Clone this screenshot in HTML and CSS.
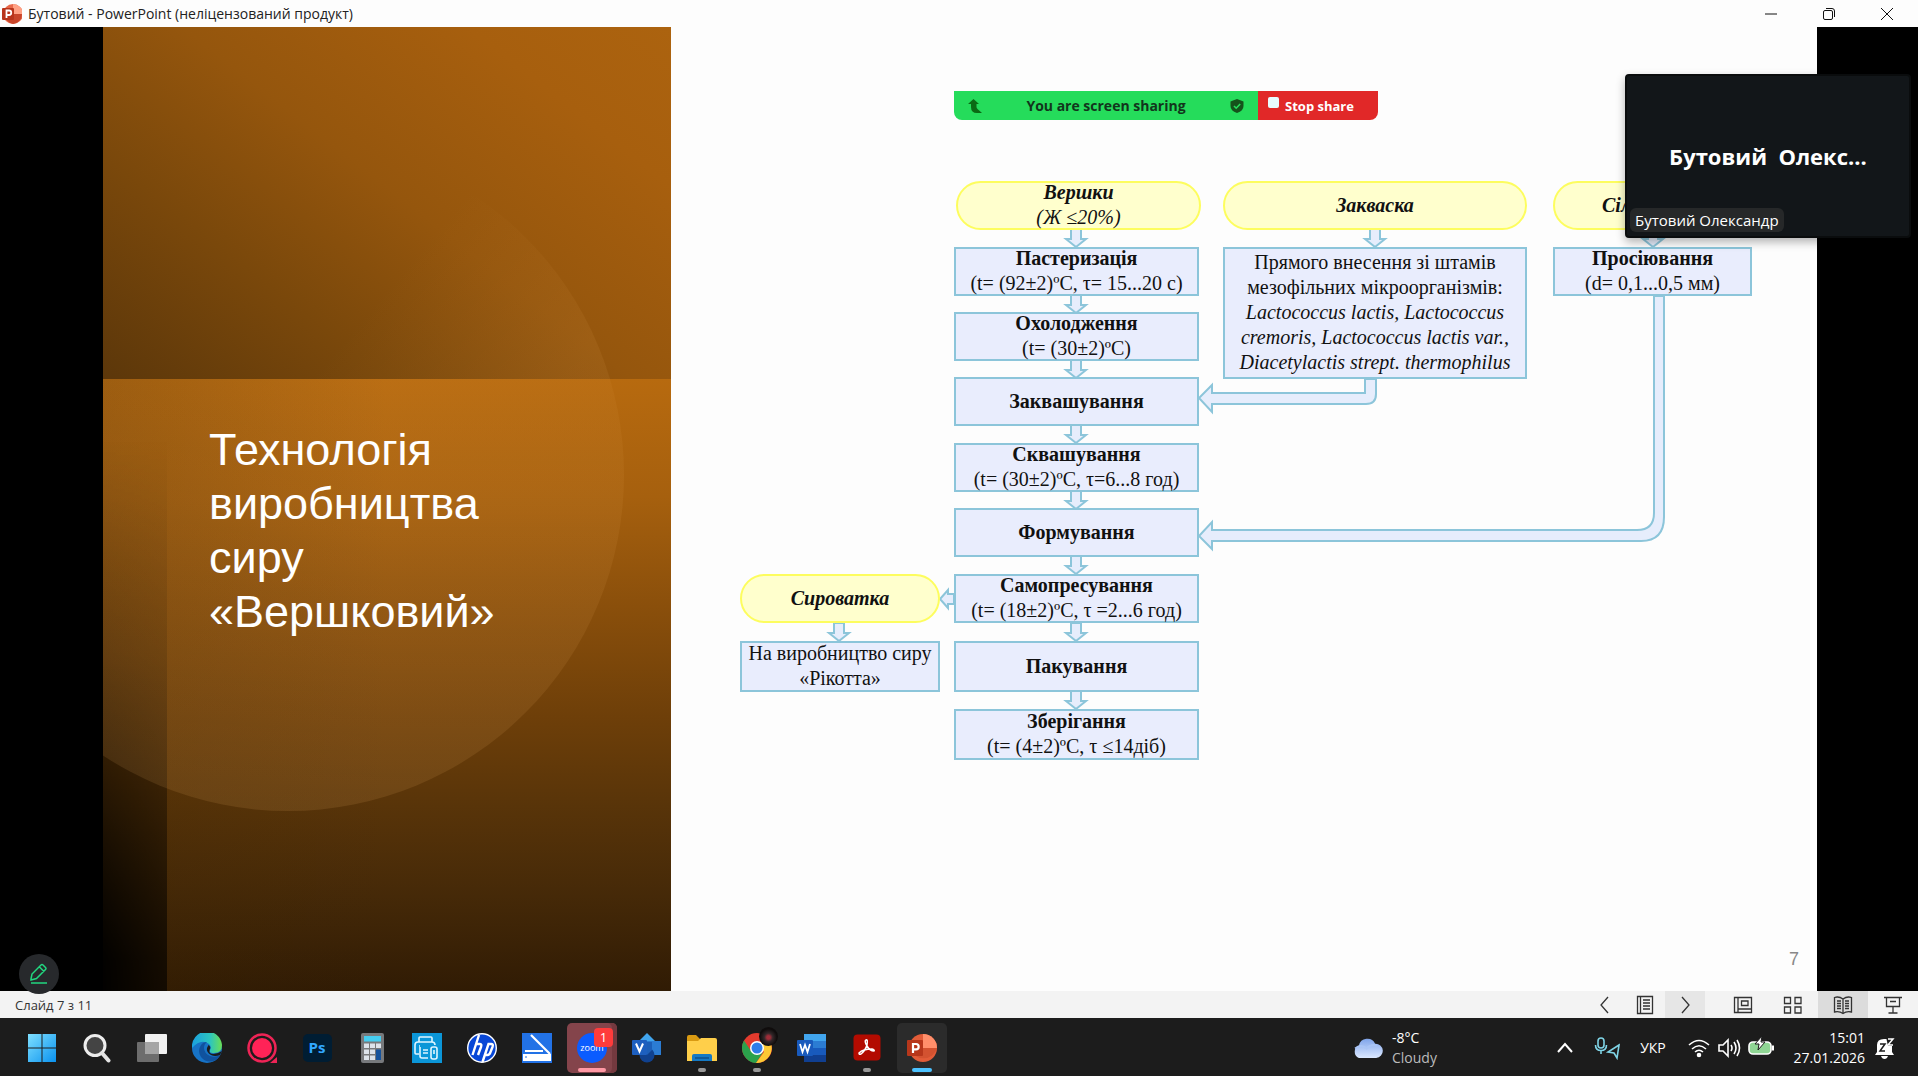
FILE: index.html
```html
<!DOCTYPE html>
<html lang="uk">
<head>
<meta charset="utf-8">
<title>Бутовий - PowerPoint</title>
<link rel="stylesheet" href="styles.css">
</head>
<body>
<header class="titlebar">
  <svg class="app-icon" viewBox="0 0 20 22" aria-hidden="true"><circle cx="11" cy="11" r="10" fill="#e8694a"/><path d="M11 1a10 10 0 0 1 10 10H11z" fill="#ffa184"/><path d="M11 21a10 10 0 0 0 9-10H3a10 10 0 0 0 8 10z" fill="#c8452a"/><rect x="0" y="5" width="12" height="12" rx="1" fill="#b8341b"/><path d="M4.500 15V7.500h2.500a2 2 0 0 1 0 4.500h-2.500" fill="none" stroke="#fff" stroke-width="1.800"/></svg>
  <h1 class="window-title">Бутовий - PowerPoint (неліцензований продукт)</h1>
  <div class="window-controls">
    <button aria-label="Згорнути"><svg viewBox="0 0 14 14"><path d="M1 7h12"/></svg></button>
    <button aria-label="Відновити"><svg viewBox="0 0 14 14"><rect x="1.500" y="3.500" width="9" height="9" rx="1.500"/><path d="M4 1.500h6a2.500 2.500 0 0 1 2.500 2.500v6"/></svg></button>
    <button aria-label="Закрити"><svg viewBox="0 0 14 14"><path d="M1 1l12 12M13 1L1 13"/></svg></button>
  </div>
</header>

<main class="stage">
  <article class="slide">
    <section class="cover">
      <div class="cover-strip"></div>
      <div class="cover-disc"></div>
      <div class="cover-top"></div>
      <h2 class="slide-title">Технологія виробництва сиру «Вершковий»</h2>
    </section>
    <section class="diagram">
      <svg class="arrows" viewBox="0 0 1146 964" aria-hidden="true">
        <defs><path id="down" d="M-5 0V10H-10L0 18L10 10H5V0z"/></defs>
        <use href="#down" x="405" y="202"/><use href="#down" x="405" y="268"/><use href="#down" x="405" y="333"/><use href="#down" x="405" y="398"/><use href="#down" x="405" y="464"/><use href="#down" x="405" y="529"/><use href="#down" x="405" y="596"/><use href="#down" x="405" y="664"/>
        <use href="#down" x="704" y="202"/><use href="#down" x="982" y="202"/><use href="#down" x="168" y="596"/>
        <path d="M283 567H277V563L269 572L277 581V577H283z"/>
        <path d="M694 352V366H541V358L528 371L541 385V377H695Q705 377 705 367V352z"/>
        <path d="M983 269V486Q983 503 966 503H541V495L528 509L541 522V514H970Q993 514 993 490V269z"/>
      </svg>
      <div class="node pill cream"><b>Вершки</b><span>(Ж ≤20%)</span></div>
      <div class="node pill starter"><b>Закваска</b></div>
      <div class="node pill salt"><b>Сіл</b></div>
      <div class="node pill whey"><b>Сироватка</b></div>
      <div class="node step s1"><b>Пастеризація</b><span>(t= (92±2)ºС, τ= 15...20 с)</span></div>
      <div class="node step s2"><b>Охолодження</b><span>(t= (30±2)ºС)</span></div>
      <div class="node step s3"><b>Заквашування</b></div>
      <div class="node step s4"><b>Сквашування</b><span>(t= (30±2)ºС, τ=6...8 год)</span></div>
      <div class="node step s5"><b>Формування</b></div>
      <div class="node step s6"><b>Самопресування</b><span>(t= (18±2)ºС, τ =2...6 год)</span></div>
      <div class="node step s7"><b>Пакування</b></div>
      <div class="node step s8"><b>Зберігання</b><span>(t= (4±2)ºС, τ ≤14діб)</span></div>
      <div class="node strains"><span>Прямого внесення зі штамів</span><span>мезофільних мікроорганізмів:</span><i>Lactococcus lactis, Lactococcus</i><i>cremoris, Lactococcus lactis var.,</i><i>Diacetylactis strept. thermophilus</i></div>
      <div class="node sieving"><b>Просіювання</b><span>(d= 0,1...0,5 мм)</span></div>
      <div class="node ricotta"><span>На виробництво сиру</span><span>«Рікотта»</span></div>
      <span class="page-number">7</span>
    </section>
  </article>

  <div class="share-bar">
    <div class="share-status">
      <svg viewBox="0 0 14 14" aria-hidden="true"><path d="M5.500 0L0 5h3v3q0 6 6 6h5L9.500 10Q8.500 9 8.500 8V5H11z" fill="#0b6a14"/></svg>
      <span>You are screen sharing</span>
      <svg viewBox="0 0 14 14" aria-hidden="true"><path d="M7 0l6.500 2.500V7q0 5-6.500 7Q.5 12 .5 7V2.500z" fill="#15521b"/><path d="M4 7l2.200 2.200L10.200 5" fill="none" stroke="#27dc5c" stroke-width="1.600"/></svg>
    </div>
    <button class="stop-share"><i class="stop-square"></i>Stop share</button>
  </div>

  <aside class="participant">
    <strong>Бутовий&nbsp; Олекс...</strong>
    <span class="name-tag">Бутовий Олександр</span>
  </aside>

  <button class="annotate" aria-label="Annotate"><svg viewBox="0 0 20 22"><path d="M2 16l1-5L12 2q1-1 2 0l2.500 2.500q1 1 0 2L7.500 15.500 2 17zM10.500 4l4.500 4.500M2 20h16"/></svg></button>
</main>

<div class="statusbar">
  <span class="slide-count">Слайд 7 з 11</span>
  <div class="nav-buttons">
    <button aria-label="Назад"><svg viewBox="0 0 20 20"><path d="M13 2L6 10l7 8"/></svg></button>
    <button aria-label="Меню"><svg viewBox="0 0 20 20"><path d="M2.500 1.500h15v17h-15zM5.500 1.500v17M8 5h7M8 8h7M8 11h7M8 14h7"/></svg></button>
    <button class="hover" aria-label="Далі"><svg viewBox="0 0 20 20"><path d="M7 2l7 8-7 8"/></svg></button>
  </div>
  <div class="view-buttons">
    <button aria-label="Звичайний"><svg viewBox="0 0 20 20"><path d="M1.500 2.500h17v15h-17zM5 2.500v15M5 14h13M8.500 6h6.500v4.500H8.500z"/></svg></button>
    <button aria-label="Сортувальник"><svg viewBox="0 0 20 20"><path d="M1.500 2.500h6v6h-6zM12 2.500h6v6h-6zM1.500 12h6v6h-6zM12 12h6v6h-6z"/></svg></button>
    <button class="active" aria-label="Читання"><svg viewBox="0 0 20 20"><path d="M10 4Q6 1 1.500 2.500V17q5-1 8.500 1.500Q13.500 16 18.500 17V2.500Q14 1 10 4zM10 4v14M4 6h4M4 8.500h4M4 11h4M4 13.500h4M12 6h4M12 8.500h4M12 11h4M12 13.500h4"/></svg></button>
    <button aria-label="Показ"><svg viewBox="0 0 20 20"><path d="M1 2.500h18M3.500 2.500v9h13v-9M10 11.500V18M5.500 18h9M7 6.500h6"/></svg></button>
  </div>
</div>

<footer class="taskbar">
  <nav class="apps">
    <button aria-label="Пуск"><svg viewBox="0 0 30 30"><defs><linearGradient id="win" x2="1" y2="1"><stop stop-color="#7fe0ff"/><stop offset="1" stop-color="#0a92ef"/></linearGradient></defs><path fill="url(#win)" d="M1 1h13.500v13.500H1zM15.500 1H29v13.500H15.500zM1 15.500h13.500V29H1zM15.500 15.500H29V29H15.500z"/></svg></button>
    <button aria-label="Пошук"><svg viewBox="0 0 30 30"><circle cx="13" cy="12.500" r="10" fill="#444" stroke="#ededed" stroke-width="3"/><path d="M20 20l6.500 7.500" stroke="#e4e4e4" stroke-width="4" stroke-linecap="round"/></svg></button>
    <button aria-label="Подання завдань"><svg viewBox="0 0 30 30"><rect x="8" y="1" width="22" height="20" rx="1" fill="#f1f1f1"/><rect x="0" y="9" width="22" height="20" rx="1" fill="#6d6d6d"/><path d="M8 9h14v12H8z" fill="#a5a5a5"/></svg></button>
    <button aria-label="Edge"><svg viewBox="0 0 30 30"><defs><linearGradient id="eg" x1="0" x2="1"><stop stop-color="#1aa0e0"/><stop offset=".6" stop-color="#2cc5c0"/><stop offset="1" stop-color="#6bdf54"/></linearGradient></defs><circle cx="15" cy="15" r="15" fill="#1773c6"/><path d="M0 15A15 15 0 0 1 30 12q0 8-8 8-5 0-4-3 2-3-1-6Q9 5 0 15z" fill="url(#eg)"/><path d="M9 12q-4 6 0 12 5 6 12 4 5-1 7-6-5 3-10 1-6-3-6-8 0-4 3-6-4 0-6 3z" fill="#10529e"/><path d="M16.500 12q3 2 1 5-1 4 4 4 4 0 8.500-3L28 22q-5 2-9 0-5-3-4-7z" fill="#1c1c1c"/></svg></button>
    <button aria-label="Запис"><svg viewBox="0 0 30 30"><circle cx="15" cy="15" r="13.500" fill="none" stroke="#ee2456" stroke-width="2.500"/><circle cx="15" cy="15" r="10" fill="#ff2357"/><path d="M30 24v6h-7z" fill="#ee2456"/></svg></button>
    <button class="ps" aria-label="Photoshop"><span>Ps</span></button>
    <button aria-label="Калькулятор"><svg viewBox="0 0 30 30"><rect x="4" y="0" width="23" height="30" rx="2" fill="#77797c"/><path d="M7 3h17v5.500H7z" fill="#45cdf0"/><path d="M7 10.500h5v4.500H7zM13 10.500h5v4.500h-5zM19 10.500h5v4.500h-5zM7 16.500h5V21H7zM13 16.500h5V21h-5zM7 22.500h5V27H7zM13 22.500h5V27h-5z" fill="#dce3eb"/><path d="M19 16.500h5V27h-5z" fill="#16539c"/></svg></button>
    <button aria-label="Принтер"><svg viewBox="0 0 30 30"><path d="M0 0h30v30H0z" fill="#0b96d8"/><g fill="none" stroke="#dff5ff" stroke-width="1.600"><path d="M7 9V5q0-1 1-1h11q1 0 1 1v4M7 21H4q-1 0-1-1v-8q0-3 3-3h14q3 0 3 3M7 13h1M8 14v9q0 2 2 2h6M11 17h5M11 20h5"/><rect x="19" y="14" width="6" height="12" rx="2"/><path d="M22 17v4"/></g></svg></button>
    <button aria-label="HP"><svg viewBox="0 0 30 30"><circle cx="15" cy="15" r="14.300" fill="#0847d7" stroke="#fff" stroke-width="1.400"/><path d="M12 2L5.500 22M9 11h4q2 0 1 3l-3 8M15.500 29l6-18h3q2 0 1 3l-2 5q-1 3-3 3h-3" fill="none" stroke="#fff" stroke-width="2.400"/></svg></button>
    <button aria-label="Сканер"><svg viewBox="0 0 30 30"><path d="M0 0h30v30H0z" fill="#2272e6"/><path d="M9 2l19 19M3 18h18" stroke="#fff" stroke-width="2.200" fill="none"/><path d="M1 21h28v7H1z" fill="#fff"/><path d="M3 24h2" stroke="#2272e6"/></svg></button>
    <button class="alert" aria-label="Zoom"><span class="zoom-logo">zoom</span><span class="badge">1</span></button>
    <button aria-label="Visio"><svg viewBox="0 0 30 30"><path d="M15 0l9 9-9 9-9-9z" fill="#41a5ee"/><path d="M15 8h14v14H15z" fill="#2b7cd3"/><circle cx="15" cy="22" r="7.500" fill="#10418f"/><path d="M15 9h5v8l-5 5z" fill="#1c5fb8"/><rect x="0" y="7" width="15" height="15" rx="1" fill="#1d5fbf"/><path d="M4 10.500l3.500 8 3.500-8" stroke="#fff" stroke-width="2" fill="none"/></svg></button>
    <button class="running" aria-label="Провідник"><svg viewBox="0 0 30 30"><path d="M0 4q0-2 2-2h7l4 4H29v10H0z" fill="#d99a12"/><path d="M0 8h11l3-3h14q2 0 2 2v21H0z" fill="#ffcf4a"/><path d="M5 28v-5q0-2 2-2h16q2 0 2 2v5z" fill="#1479c4"/><path d="M8 25h14" stroke="#0c4f8a" stroke-width="1.500"/></svg></button>
    <button class="running" aria-label="Chrome"><svg viewBox="0 0 30 30"><circle cx="15" cy="15" r="15" fill="#e33b2e"/><path d="M2 7.500A15 15 0 0 0 14 30l7-11L9 18z" fill="#2ba24c"/><path d="M28.500 9H17l5 10-8 11A15 15 0 0 0 28.500 9z" fill="#fcc934"/><circle cx="15" cy="15" r="7" fill="#fff"/><circle cx="15" cy="15" r="5.500" fill="#2f7de9"/></svg><i class="profile"></i></button>
    <button aria-label="Word"><svg viewBox="0 0 30 30"><path d="M7 1h22v7H7z" fill="#41a5ee"/><path d="M7 8h22v7H7z" fill="#2b7cd3"/><path d="M7 15h22v7H7z" fill="#185abd"/><path d="M7 22h22v7H7z" fill="#103f91"/><rect x="0" y="7" width="16" height="16" rx="1" fill="#185abd"/><path d="M3 11l2.500 8L8 12l2.500 7L13 11" stroke="#fff" stroke-width="1.800" fill="none"/></svg></button>
    <button class="running" aria-label="Acrobat"><svg viewBox="0 0 30 30"><rect x="1.500" y="1.500" width="27" height="26" rx="4" fill="#b30b00"/><path d="M14 7q2-1 1 5-2 6-6 9-2 1-2-1 4-4 13-4 3 1 2 2-4 0-7-5-3-5-1-6z" fill="none" stroke="#fff" stroke-width="1.500"/></svg></button>
    <button class="current" aria-label="PowerPoint"><svg viewBox="0 0 30 30"><circle cx="16" cy="15" r="14" fill="#e25c38"/><path d="M16 1a14 14 0 0 1 14 14H16z" fill="#ff8f6b"/><path d="M3 15h27a14 14 0 0 1-27 0z" fill="#d35230"/><rect x="0" y="7" width="16" height="16" rx="1" fill="#b7371b"/><path d="M6 20v-9h3a2.500 2.500 0 0 1 0 5.300H6" fill="none" stroke="#fff" stroke-width="2.200"/></svg></button>
  </nav>
  <button class="weather">
    <svg viewBox="0 0 32 22" aria-hidden="true"><defs><linearGradient id="cl" x2="0" y2="1"><stop stop-color="#7fa4ea"/><stop offset="1" stop-color="#dbe8ff"/></linearGradient></defs><path d="M7 22a7 7 0 0 1 0-13 9 9 0 0 1 17-2 7.500 7.500 0 0 1 1 15z" fill="url(#cl)"/><path d="M3 12q6-5 12 0 5-5 11-3" fill="none" stroke="#a9c4f5" stroke-width="2"/></svg>
    <span class="weather-text"><span>-8°C</span><span class="dim">Cloudy</span></span>
  </button>
  <div class="tray">
    <button aria-label="Приховані"><svg class="line" viewBox="0 0 24 24"><path d="M5 16l7-8 7 8" stroke-width="2"/></svg></button>
    <button class="mic" aria-label="Мікрофон"><svg viewBox="0 0 28 24"><g fill="none" stroke="#7fd4e6" stroke-width="1.600"><rect x="5" y="2" width="6" height="10" rx="3"/><path d="M2.500 9q0 5.500 5.500 5.500T13.500 9M8 15v3M26 9L15 16l6 1 3 5z"/></g></svg></button>
    <button class="lang">УКР</button>
    <button class="net" aria-label="Мережа">
      <svg class="line" viewBox="0 0 24 24"><path d="M2 9q10-9 20 0M5 13q7-6.500 14 0M8 16q4-3.500 8 0"/><circle cx="12" cy="19" r="1.500" fill="#fff"/></svg>
      <svg class="line" viewBox="0 0 24 24"><path d="M2 9h4l5-5v16l-5-5H2zM14 9q2 3 0 6M17 6q4 6 0 12M20 4q5 8 0 16"/></svg>
      <svg class="battery" viewBox="0 0 28 24"><rect x="2" y="6" width="22" height="12" rx="4" fill="#8fd694" stroke="#fff" stroke-width="1.600"/><path d="M26 9.500v5" stroke="#fff" stroke-width="2"/><path d="M15 0L8 8h4l-1 6 7-8h-4z" fill="#fff" stroke="#1c1c1c"/></svg>
    </button>
    <button class="clock"><time>15:01</time><time>27.01.2026</time></button>
    <button class="bell" aria-label="Сповіщення"><svg viewBox="0 0 22 24"><path d="M3 16V9q0-6 7-6h8v13l2 3H1z" fill="#fff"/><path d="M7 20h7q-1 3-3.500 3T7 20z" fill="#fff"/><path d="M6 8h5l-5 7h5" fill="none" stroke="#1c1c1c" stroke-width="1.500"/><path d="M12 1h9v9h-7z" fill="#1c1c1c"/><path d="M14 3h5l-5 6h5" fill="none" stroke="#fff" stroke-width="1.500"/></svg></button>
  </div>
</footer>
</body>
</html>
```
FILE: styles.css
```css
* { box-sizing: border-box; }

body {
  margin: 0;
  min-height: 100vh;
  display: flex;
  flex-direction: column;
  overflow: hidden;
  font: 15px/20px "Open Sans", "Noto Sans", sans-serif;
  background: #fff;
}

button {
  border: 0;
  padding: 0;
  background: none;
  font: inherit;
  color: inherit;
  display: flex;
  align-items: center;
  justify-content: center;
}

svg { display: block; flex: none; }

/* Window title bar */
.titlebar {
  height: 27px;
  display: flex;
  align-items: center;
  gap: 6px;
  padding: 0 2px;
  background: #fdfdfd;
}
.app-icon { width: 20px; height: 22px; }
.window-title { margin: 0; flex: 1; font-size: 14px; font-weight: 400; color: #222; }
.window-controls { display: flex; }
.window-controls button { width: 58px; height: 24px; }
.window-controls svg { width: 14px; height: 14px; fill: none; stroke: #111; }

/* Slide area */
.stage {
  position: relative;
  flex: 1;
  display: grid;
  grid-template-columns: 103fr 1714fr 101fr;
  background: #000;
}
.slide {
  grid-column: 2;
  display: grid;
  grid-template-columns: 568fr 1146fr;
  background: #fdfdfd;
}

.cover {
  position: relative;
  overflow: hidden;
  padding: 393px 104px 0 106px;
  background:
    linear-gradient(90deg, rgba(60, 35, 0, .25), rgba(60, 35, 0, 0) 50%),
    linear-gradient(#b76a0f 352px, #a6600e 470px, #8a4f0b 580px, #6e3f09 690px, #583409 780px, #452908 870px, #301b04 100%);
}
.cover-strip {
  position: absolute;
  inset: 352px auto 0 0;
  width: 64px;
  background: linear-gradient(90deg, rgba(0, 0, 0, .95), rgba(0, 0, 0, .6));
  -webkit-mask-image: linear-gradient(transparent 10%, rgba(0, 0, 0, .25) 45%, rgba(0, 0, 0, .6) 70%, #000 95%);
  mask-image: linear-gradient(transparent 10%, rgba(0, 0, 0, .25) 45%, rgba(0, 0, 0, .6) 70%, #000 95%);
}
.cover-disc, .cover-top::after {
  content: "";
  position: absolute;
  left: -151px;
  top: 112px;
  width: 672px;
  height: 672px;
  border-radius: 50%;
  background: linear-gradient(rgba(255, 190, 110, .05) 35%, rgba(255, 190, 110, .12));
}
.cover-top {
  position: absolute;
  inset: 0 0 auto;
  height: 352px;
  overflow: hidden;
  background: linear-gradient(38deg, #5c370a, #7a480b 28%, #95560d 52%, #a75f0e 80%, #ac630f);
}
.cover-top::after {
  background: linear-gradient(130deg, rgba(255, 190, 110, 0) 45%, rgba(255, 190, 110, .08) 66%);
}
.slide-title {
  position: relative;
  margin: 0;
  padding-top: 3px;
  color: #fff;
  font: 400 45px/54px "Liberation Sans", Arial, sans-serif;
}

/* Flow chart */
.diagram { position: relative; font: 20px/25px "Liberation Serif", "Times New Roman", serif; color: #111; }
.arrows { width: 1146px; height: 964px; fill: #e6edfc; stroke: #8cc5da; stroke-width: 2; }
.node {
  position: absolute;
  display: flex;
  flex-direction: column;
  align-items: center;
  justify-content: center;
  padding-bottom: 1px;
  white-space: nowrap;
  background: #e9edfd;
  border: 2px solid #8cc5da;
}
.pill {
  top: 154px;
  height: 49px;
  border-color: #fdfd5e;
  border-radius: 25px;
  background: #ffffcd;
  font-style: italic;
}
.cream { left: 285px; width: 245px; }
.starter { left: 552px; width: 304px; }
.salt { left: 882px; width: 199px; align-items: flex-start; padding-left: 47px; }
.whey { left: 69px; top: 547px; width: 200px; }
.step { left: 283px; width: 245px; height: 49px; }
.s1 { top: 220px; }
.s2 { top: 285px; }
.s3 { top: 350px; }
.s4 { top: 416px; }
.s5 { top: 481px; }
.s6 { top: 547px; }
.s7 { top: 614px; height: 51px; }
.s8 { top: 682px; height: 51px; }
.strains { left: 552px; top: 220px; width: 304px; height: 132px; }
.sieving { left: 882px; top: 220px; width: 199px; height: 49px; }
.ricotta { left: 69px; top: 614px; width: 200px; height: 51px; }
.page-number {
  position: absolute;
  right: 18px;
  bottom: 20px;
  font: 18px/24px "Liberation Sans", Arial, sans-serif;
  color: #888;
}

/* Screen sharing overlay */
.share-bar {
  position: absolute;
  left: 954px;
  top: 64px;
  width: 424px;
  height: 29px;
  display: flex;
  border-radius: 0 0 8px 8px;
  overflow: hidden;
  font-weight: 700;
  font-size: 14px;
}
.share-status {
  flex: 1;
  display: flex;
  align-items: center;
  justify-content: space-between;
  padding: 0 14px;
  background: #25dc5b;
  color: #12351c;
}
.share-status svg { width: 14px; height: 14px; }
.stop-share { width: 120px; gap: 6px; padding-right: 14px; background: #e12828; color: #fff; font-size: 13px; }
.stop-square { width: 11px; height: 11px; margin-bottom: 6px; border-radius: 2px; background: #e8fbff; }

.participant {
  position: absolute;
  left: 1625px;
  top: 47px;
  width: 286px;
  height: 164px;
  display: flex;
  align-items: center;
  justify-content: center;
  border: 2px solid #0a0c0d;
  border-radius: 4px;
  background: #121619;
  color: #fff;
  box-shadow: 0 4px 10px rgba(0, 0, 0, .3);
  font-size: 22px;
}
.name-tag {
  position: absolute;
  left: 3px;
  bottom: 4px;
  padding: 2px 5px;
  border-radius: 6px;
  background: #262829;
  font-size: 15px;
}
.annotate {
  position: absolute;
  left: 19px;
  bottom: -3px;
  width: 40px;
  height: 40px;
  border-radius: 50%;
  background: #27292c;
  z-index: 1;
}
.annotate svg { width: 20px; height: 22px; fill: none; stroke: #22d67f; stroke-width: 1.500; }

/* Status bar */
.statusbar {
  height: 27px;
  display: flex;
  padding-left: 15px;
  background: #f3f3f3;
  color: #333;
  font-size: 13px;
  line-height: 28px;
}
.slide-count { flex: 1; }
.nav-buttons, .view-buttons { display: flex; }
.nav-buttons button { width: 40px; }
.view-buttons { margin-left: 13px; }
.view-buttons button { width: 50px; }
.statusbar svg { width: 20px; height: 20px; fill: none; stroke: #333; stroke-width: 1.300; }
.hover { background: #e6e6e6; }
.active { background: #dcdcdc; }

/* Taskbar */
.taskbar {
  height: 58px;
  display: flex;
  align-items: center;
  padding: 1px 0 0 17px;
  background: #1c1c1c;
  color: #fff;
}
.apps { display: flex; gap: 5px; }
.apps button { position: relative; width: 50px; height: 50px; border-radius: 5px; }
.apps svg { width: 30px; height: 30px; }
.ps span {
  width: 29px;
  height: 28px;
  border-radius: 5px;
  background: #001d33;
  color: #31a8ff;
  font-weight: 700;
  line-height: 26px;
}
.apps .alert { background: #84444b; box-shadow: inset -5px 0 #74393f; }
.zoom-logo {
  width: 30px;
  height: 30px;
  border-radius: 50%;
  background: #0b5cff;
  font-size: 9px;
  line-height: 29px;
}
.badge {
  position: absolute;
  left: 27px;
  top: 5px;
  width: 19px;
  height: 19px;
  border-radius: 4px;
  background: #ff3b3b;
  font-size: 13px;
  line-height: 19px;
}
.apps .current { background: #2b2b2b; }
.running::after, .alert::after, .current::after {
  content: "";
  position: absolute;
  bottom: 1px;
  width: 8px;
  height: 4px;
  border-radius: 2px;
  background: #999;
}
.alert::after { width: 28px; background: #ff98a4; }
.current::after { width: 20px; background: #4cc2ff; }
.profile {
  position: absolute;
  left: 27px;
  top: 4px;
  width: 19px;
  height: 19px;
  border-radius: 50%;
  background: radial-gradient(circle at 50% 55%, #a02c38 12%, #33282a 30%, #0f0c0c 60%);
}
.weather { gap: 9px; margin-left: auto; margin-right: 99px; }
.weather svg { width: 31px; height: 21px; }
.weather-text { display: flex; flex-direction: column; width: 62px; text-align: left; font-size: 14px; }
.dim { color: #bbb; }
.tray { display: flex; align-items: center; font-size: 14px; }
.tray svg { width: 24px; height: 24px; }
.tray .line { fill: none; stroke: #fff; stroke-width: 1.600; }
.tray .mic svg, .tray .battery { width: 28px; height: 24px; }
.mic { margin-left: 16px; }
.lang { width: 64px; }
.net { gap: 6px; padding-left: 2px; }
.clock { flex-direction: column; align-items: flex-end; width: 90px; }
.bell { padding: 0 22px 0 9px; }
.bell svg { width: 22px; height: 24px; }
```
